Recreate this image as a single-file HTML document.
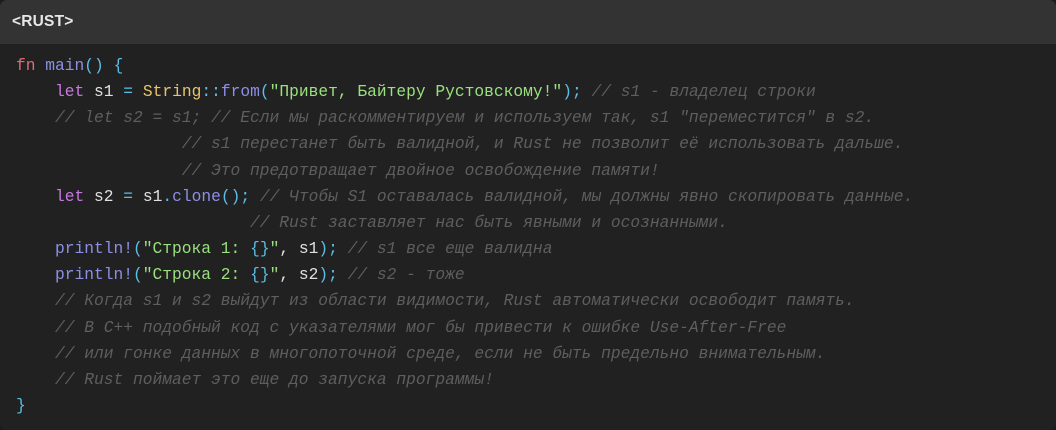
<!DOCTYPE html>
<html><head><meta charset="utf-8"><style>
html,body{margin:0;padding:0;background:#1c1c1c;width:1056px;height:430px;overflow:hidden}
.box{position:absolute;left:0;top:0;width:1056px;height:430px;border-radius:7px;overflow:hidden;background:#212121}
.hd{height:44px;background:#333333;color:#e8e8e8;font:bold 15.5px "Liberation Sans",sans-serif;line-height:44px;padding-left:12px;letter-spacing:0.2px}
pre{margin:0;position:absolute;left:16px;top:53px;font-family:"Liberation Mono","DejaVu Sans Mono",monospace;font-size:16.25px;line-height:26.15px;color:#e0e0e0}
.k{color:#e06c75}.f{color:#8c8fe6}.p{color:#5cbde6}.l{color:#c678dd}.t{color:#e8c46a}.s{color:#9ae07e}.c{color:#5e5e5e;font-style:italic}
</style></head><body><div class="box">
<div class="hd">&lt;RUST&gt;</div>
<pre><span class="k">fn</span> <span class="f">main</span><span class="p">()</span> <span class="p">{</span>
    <span class="l">let</span> s1 <span class="p">=</span> <span class="t">String</span><span class="p">::</span><span class="f">from</span><span class="p">(</span><span class="s">"Привет, Байтеру Рустовскому!"</span><span class="p">);</span> <span class="c">// s1 - владелец строки</span>
    <span class="c">// let s2 = s1; // Если мы раскомментируем и используем так, s1 "переместится" в s2.</span>
                 <span class="c">// s1 перестанет быть валидной, и Rust не позволит её использовать дальше.</span>
                 <span class="c">// Это предотвращает двойное освобождение памяти!</span>
    <span class="l">let</span> s2 <span class="p">=</span> s1<span class="p">.</span><span class="f">clone</span><span class="p">();</span> <span class="c">// Чтобы S1 оставалась валидной, мы должны явно скопировать данные.</span>
                        <span class="c">// Rust заставляет нас быть явными и осознанными.</span>
    <span class="f">println!</span><span class="p">(</span><span class="s">"Строка 1: </span><span class="p">{}</span><span class="s">"</span>, s1<span class="p">);</span> <span class="c">// s1 все еще валидна</span>
    <span class="f">println!</span><span class="p">(</span><span class="s">"Строка 2: </span><span class="p">{}</span><span class="s">"</span>, s2<span class="p">);</span> <span class="c">// s2 - тоже</span>
    <span class="c">// Когда s1 и s2 выйдут из области видимости, Rust автоматически освободит память.</span>
    <span class="c">// В C++ подобный код с указателями мог бы привести к ошибке Use-After-Free</span>
    <span class="c">// или гонке данных в многопоточной среде, если не быть предельно внимательным.</span>
    <span class="c">// Rust поймает это еще до запуска программы!</span>
<span class="p">}</span></pre>
</div></body></html>
